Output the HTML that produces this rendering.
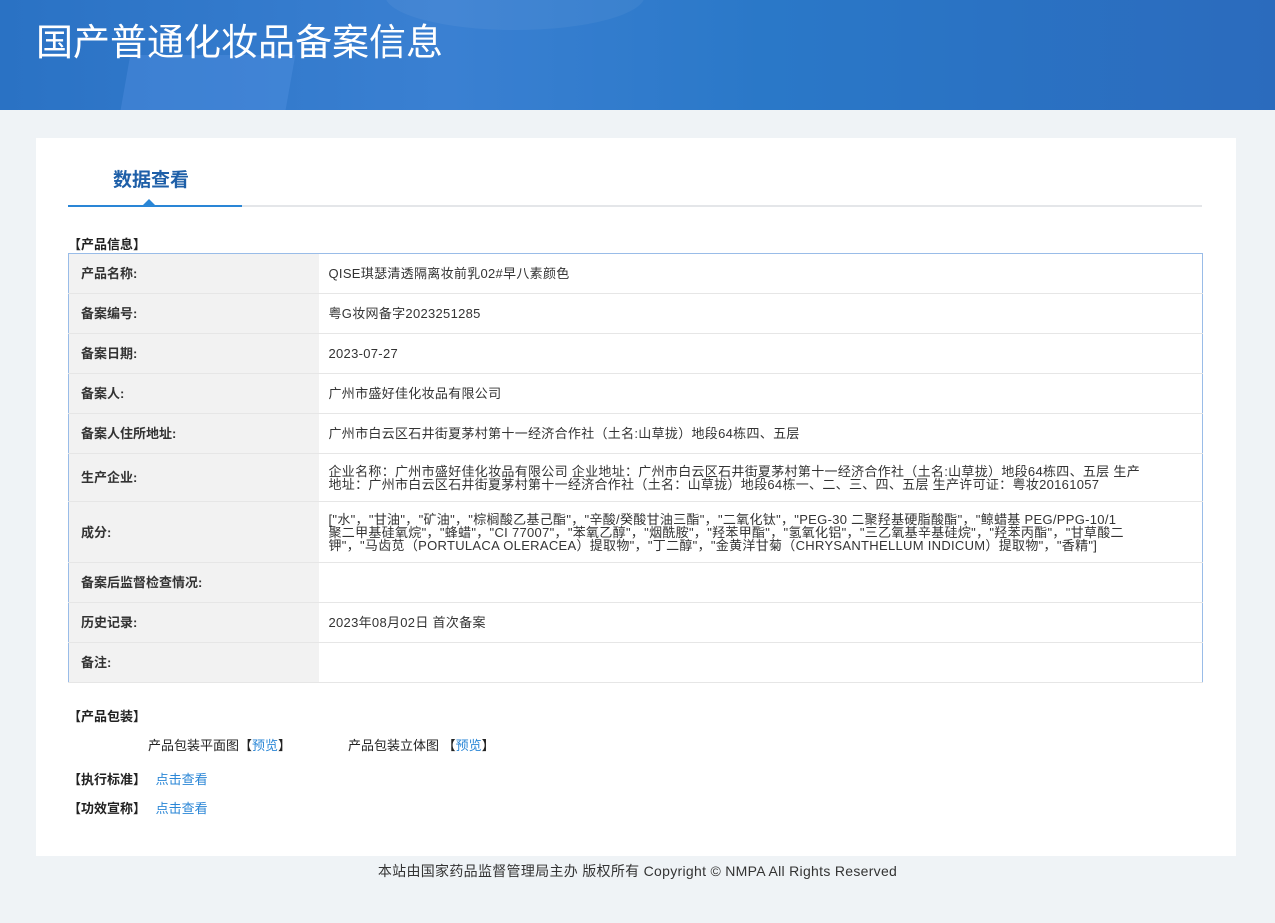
<!DOCTYPE html>
<html><head><meta charset="utf-8"><style>
*{margin:0;padding:0;box-sizing:border-box}
body{width:1275px;height:923px;background:#eff3f6;font-family:"Liberation Sans","Noto Sans CJK SC",sans-serif;font-size:13px;color:#333;position:relative;overflow:hidden}
.hd{position:absolute;left:0;top:0;width:1275px;height:110px;background:linear-gradient(90deg,#2a72c4 0%,#3a80d2 35%,#2a78c8 60%,#2b6bbd 100%);overflow:hidden}
.hd .b1{position:absolute;left:125px;top:55px;width:165px;height:60px;background:rgba(90,150,230,.35);transform:skew(-10deg)}
.hd .b2{position:absolute;left:385px;top:-40px;width:260px;height:70px;border-radius:50%;background:rgba(255,255,255,.05)}
.hd h1{position:absolute;left:36px;top:12px;font-size:37px;font-weight:normal;color:#fff;font-family:"Liberation Sans","Noto Sans CJK SC",sans-serif}
.card{position:absolute;left:36px;top:138px;width:1200px;height:718px;background:#fff}
.tab{position:absolute;left:77px;top:27px;font-size:19px;font-weight:bold;color:#1e5fa8}
.line{position:absolute;left:32px;top:67px;width:1134px;height:2px;background:#e4e6e9}
.line i{position:absolute;left:0;top:0;width:174px;height:2px;background:#2a86d6}
.tri{position:absolute;left:107px;top:61px;width:0;height:0;border-left:6px solid transparent;border-right:6px solid transparent;border-bottom:6px solid #2a86d6}
.sec{position:absolute;left:32px;font-weight:bold;color:#222;font-size:13px}
table{position:absolute;left:32px;top:115px;width:1135px;border-collapse:collapse;border:1px solid #99bce8}
td{border-bottom:1px solid #e6e6e6;font-size:13px;padding:0 20px 0 10px;vertical-align:middle;line-height:13px;letter-spacing:0.3px;white-space:nowrap}
td.l{width:250px;background:#f2f2f2;font-weight:bold;color:#333;padding:0 0 0 12px;letter-spacing:0}
a{color:#2a86d6;text-decoration:none}
.ft{position:absolute;top:861px;left:0;width:1275px;text-align:center;font-size:14px;color:#333;letter-spacing:0.3px}
</style></head><body>
<div class="hd"><div class="b1"></div><div class="b2"></div><h1>国产普通化妆品备案信息</h1></div>
<div class="card">
<div class="tab">数据查看</div>
<div class="line"><i></i></div><div class="tri"></div>
<div class="sec" style="top:96px">【产品信息】</div>
<table>
<tr style="height:40px"><td class="l">产品名称:</td><td>QISE琪瑟清透隔离妆前乳02#早八素颜色</td></tr>
<tr style="height:40px"><td class="l">备案编号:</td><td>粤G妆网备字2023251285</td></tr>
<tr style="height:40px"><td class="l">备案日期:</td><td>2023-07-27</td></tr>
<tr style="height:40px"><td class="l">备案人:</td><td>广州市盛好佳化妆品有限公司</td></tr>
<tr style="height:40px"><td class="l">备案人住所地址:</td><td>广州市白云区石井街夏茅村第十一经济合作社（土名:山草拢）地段64栋四、五层</td></tr>
<tr style="height:48px"><td class="l">生产企业:</td><td>企业名称：广州市盛好佳化妆品有限公司 企业地址：广州市白云区石井街夏茅村第十一经济合作社（土名:山草拢）地段64栋四、五层 生产<br>地址：广州市白云区石井街夏茅村第十一经济合作社（土名：山草拢）地段64栋一、二、三、四、五层 生产许可证：粤妆20161057</td></tr>
<tr style="height:61px"><td class="l">成分:</td><td>["水"，"甘油"，"矿油"，"棕榈酸乙基己酯"，"辛酸/癸酸甘油三酯"，"二氧化钛"，"PEG-30 二聚羟基硬脂酸酯"，"鲸蜡基 PEG/PPG-10/1<br>聚二甲基硅氧烷"，"蜂蜡"，"CI 77007"，"苯氧乙醇"，"烟酰胺"，"羟苯甲酯"，"氢氧化铝"，"三乙氧基辛基硅烷"，"羟苯丙酯"，"甘草酸二<br>钾"，"马齿苋（PORTULACA OLERACEA）提取物"，"丁二醇"，"金黄洋甘菊（CHRYSANTHELLUM INDICUM）提取物"，"香精"]</td></tr>
<tr style="height:40px"><td class="l">备案后监督检查情况:</td><td></td></tr>
<tr style="height:40px"><td class="l">历史记录:</td><td>2023年08月02日 首次备案</td></tr>
<tr style="height:40px"><td class="l">备注:</td><td></td></tr>
</table>
<div class="sec" style="top:568px">【产品包装】</div>
<div style="position:absolute;left:112px;top:597px;color:#222">产品包装平面图【<a>预览</a>】</div>
<div style="position:absolute;left:312px;top:597px;color:#222">产品包装立体图 【<a>预览</a>】</div>
<div class="sec" style="top:631px">【执行标准】 <a style="font-weight:normal;margin-left:6px">点击查看</a></div>
<div class="sec" style="top:660px">【功效宣称】 <a style="font-weight:normal;margin-left:6px">点击查看</a></div>
</div>
<div class="ft">本站由国家药品监督管理局主办 版权所有 Copyright © NMPA All Rights Reserved</div>
</body></html>
